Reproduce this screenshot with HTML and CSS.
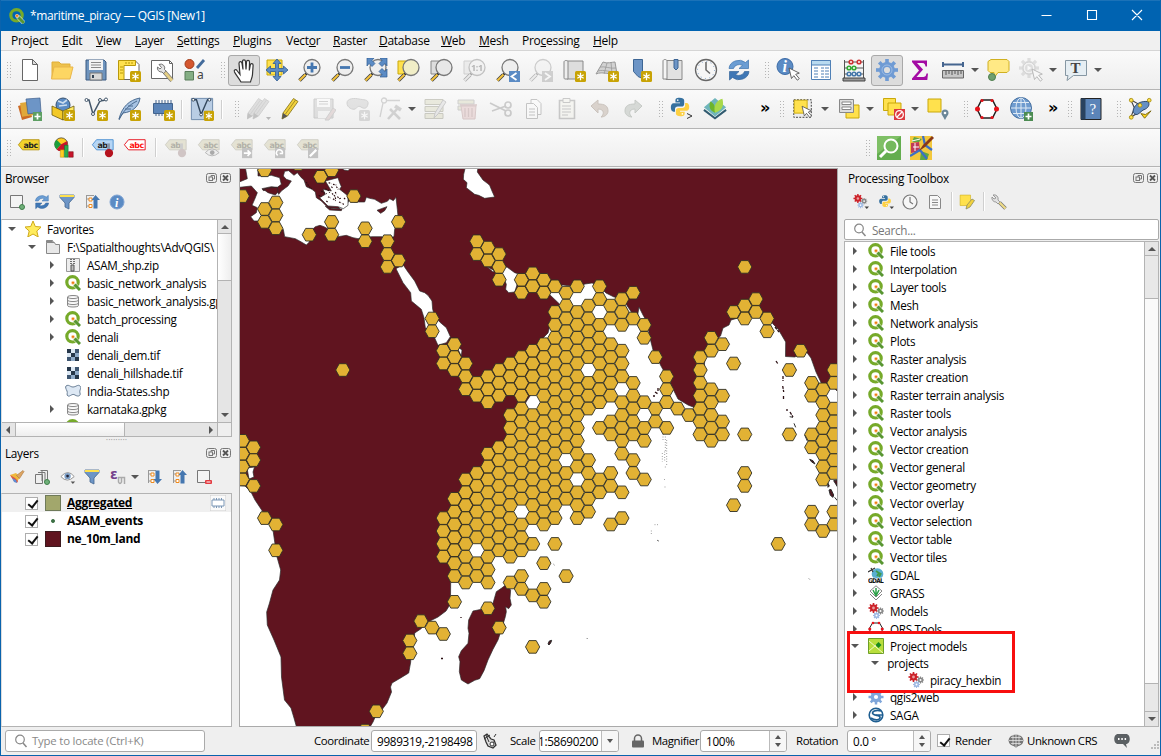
FILE: index.html
```html
<!DOCTYPE html>
<html lang="en">
<head>
<meta charset="utf-8">
<title>*maritime_piracy — QGIS [New1]</title>
<link rel="stylesheet" href="styles.css">
</head>
<body>
<div class="window">
  <header class="titlebar">
    <span class="app-icon" data-icon="q"></span>
    <span class="title">*maritime_piracy — QGIS [New1]</span>
    <svg class="winbtns" viewBox="0 0 120 30" width="120" height="30"><path d="M10.500 15.500h10M56.500 10.500h9v9h-9zM101 10l10 10M111 10l-10 10" fill="none" stroke="#fff" stroke-width="1.1"/></svg>
  </header>
  <nav class="menubar" id="menu"></nav>
  <div class="toolbar" id="tb1"></div>
  <div class="toolbar" id="tb2"></div>
  <div class="toolbar last" id="tb3"></div>
  <main class="work">
    <aside class="left">
      <div class="dock-title"><span>Browser</span><span class="dock-btns" data-icon="dock"></span></div>
      <div class="mini" id="browser-tools"></div>
      <div class="tree-box browser">
        <div class="tree-view">
          <div class="tree" id="browser-tree"></div>
          <div class="vscroll"><i class="arrow up"></i><b class="thumb-a"></b><i class="arrow down"></i></div>
        </div>
        <div class="hscroll"><i class="arrow lf"></i><b></b><em></em><i class="arrow rt"></i><s></s></div>
      </div>
      <div class="splitter">·········</div>
      <div class="dock-title layers-title"><span>Layers</span><span class="dock-btns" data-icon="dock"></span></div>
      <div class="mini layers-mini" id="layer-tools"></div>
      <div class="tree-box layers">
        <div class="layer current"><i class="check"></i><i class="swatch olive"></i><u>Aggregated</u><span class="mem" data-icon="mem"></span></div>
        <div class="layer"><i class="check"></i><i class="swatch point"></i><span>ASAM_events</span></div>
        <div class="layer"><i class="check"></i><i class="swatch land"></i><span>ne_10m_land</span></div>
      </div>
    </aside>
    <section class="map">
      <svg id="map" viewBox="240 169 597 557" width="597" height="557">
        <rect x="240" y="169" width="597" height="557" fill="#60141f"/>
        <g fill="#fff" stroke="#2b2b2b" stroke-width="2" transform="translate(238 166) scale(.33333)">
          <path d="M22 4L28 38 4 48V64L40 60 58 80 50 100 42 118 58 125 55 140 38 152 48 165 90 165 115 200 136 190 140 212 172 218 190 228 205 237 214 228 218 195 232 182 246 178 258 182 272 190 300 212 325 208 345 215 360 218 375 215 400 212 432 212 440 218 468 212 470 190 478 165 480 150 478 130 474 94 466 104 455 98 448 106 430 112 410 100 395 97 385 94 380 108 350 108 335 100 325 118 300 118 305 128 270 125 250 105 235 95 232 78 222 70 205 62 198 42 190 35 178 20 168 28 152 14 140 16 136 30 145 40 160 45 150 60 130 75 122 85 118 75 105 66 76 74 72 68 100 62 118 64 130 55 125 35 100 28 60 30 60 4z"/>
          <path d="M262 45L300 35 305 50 310 62 305 70 318 80 330 90 330 118 316 128 300 122 270 120 255 105 245 95 262 85 255 70 280 75z"/>
          <path d="M308 4H340L330 14 318 12z"/>
          <path d="M76 70L95 66 118 64 120 78 112 87 90 80zM262 121L285 128 312 129 310 134 275 132zM417 133L430 128 447 122 440 134 428 142z" fill="#60141f"/>
          <path d="M250 75l6 5 10 3M262 68l10 6 3 6M270 92l8 4M282 82l9 9 2 8M295 62l6 8M285 98l8 6M298 92l7 6 5-2M265 105l6 5M303 108l8 3M280 62l5 5M318 96l5 5M242 88l8 4M272 50l8 3M314 112l3 4M205 48l8 14 8 6M285 55l10 2M292 78l3 8" fill="none" stroke="#2b1014" stroke-width="3.500" stroke-dasharray="5 3"/>
          <path d="M682 4L677 25 676 40 687 50 685 65 710 85 722 88 740 97 770 93 762 75 755 58 748 52 735 42 718 18 720 4z"/>
          <path d="M745 300L765 318 790 300 808 304 830 320 845 325 836 360 830 378 812 380 803 370 805 355 795 330z"/>
          <path d="M474 308L495 296 510 318 530 345 545 375 560 380 570 388 582 405 584 430 590 450 605 468 625 485 637 512 625 530 600 538 585 505 562 485 558 455 550 430 520 405 518 380 495 350zM655 540L672 552 670 570z"/>
        </g>
        <g fill="#fff" stroke="#2b2b2b" stroke-width=".7">
          <path d="M532 393L526 402 520 420 500 460 480 490 463 540 455 570 450.700 582 450.500 596 449.700 605 446 611 438 617 428 622 420.700 629 414.700 633 414 642 411 652 410.700 662 408.700 673 401 677.700 392 683 390.500 687 391.500 692 387 703 381 711 376 715 373 722 370 727H838V392L831 385 821.300 383 816 372 811 358 806.500 352 794.700 357 785.500 356.500 785.700 342 781 334 778 329 773 324 768 317 755 313 738 318 731 320 729 325 723 328 720.500 336 712 344 705 355 704 373 703 405 694.500 407.500 688 405 678 399 673 389 670 382 661 366 653 350 650 338 647 322 643 315 639 307 637.500 316 632 313 622 298 614 297 606 293 598 285 592 283 585 284 578 287 563 285 555 287 549 294 559.500 304 552 317 548 333 543 338 540 370z"/>
          <path d="M239 485.500L245 486 251 492 255 500 261 509 268 520 273 530 275 544 277 557 280.700 570 279.500 580 273 590 269.500 603 266.700 612 267.300 625 274 640 281 657 281.500 677 284.500 700 291 708 294 718 296.500 727H239z"/>
          <path d="M247 468L254.500 467 253 472 254 477 249 479z"/>
        </g>
        <path transform="translate(238 410) scale(.33333)" fill="#60141f" stroke="#2b2b2b" stroke-width="2" d="M803 525L818 540 816 565 820 585 812 596 803 590 805 605 802 620 790 660 780 690 765 718 750 750 738 782 725 806 710 811 690 822 670 810 664 785 666 755 662 740 670 722 690 700 693 670 690 655 692 630 705 603 730 598 745 592 765 580 775 545 790 535z"/>
        <g transform="translate(538 410) scale(.33333)" fill="#4f1620" stroke="#2b2b2b">
          <path d="M30 702l4-9 7-2-3 8-5 6zM873 240l6-2 8 17-2 7-8-6zM887 212l11-2v20zM815 148l10 4 6 10-10-6zM869 218l5 10-4 4zM890 262l8 10M800 75l8 18M768 40l5 12M755 20l10 2M358 391l4 2M146 684l2 2M813 506l2 2M47 463l2 2" stroke-width="3"/>
          <path d="M375 72v22M382 80v45M386 90v80M373 130v25M380 125v30M382 170v5M378 208l6 2M381 230v4M350 344h10M340 362v15" fill="none" stroke-width="2" stroke-dasharray="2 6"/>
        </g>
        <path d="M783 376v5M782.700 386l1 6M783.500 396v4M787 409v2M790 412l3 5M776 361l2 3M775 327l4 5M655 392l3 2M653 396h2M658 388v3M441 658.500h2M461 617v1" stroke="#2b1014" stroke-width="1.300" stroke-dasharray="3 1"/>
        <g id="hexes" fill="#e2b234" stroke="#2f2f24" stroke-width=".9"></g>
      </svg>
    </section>
    <aside class="right">
      <div class="dock-title"><span>Processing Toolbox</span><span class="dock-btns" data-icon="dock"></span></div>
      <div class="mini" id="proc-tools"></div>
      <div class="search"><span data-icon="find"></span>Search...</div>
      <div class="tree-box toolbox">
        <div class="tree" id="proc-tree"></div>
        <div class="vscroll"><i class="arrow up"></i><b class="thumb-b"></b><em></em><b class="thumb-c"></b><i class="arrow down"></i></div>
      </div>
    </aside>
  </main>
  <footer class="status">
    <div class="locate"><span data-icon="find"></span>Type to locate (Ctrl+K)</div>
    <span class="lab coord-lab">Coordinate</span><div class="field coord">9989319,-2198498</div>
    <span class="mouse" data-icon="mouse"></span>
    <span class="lab scale-lab">Scale</span><div class="field scale"><span>1:58690200</span><i><b class="arrow down"></b></i></div>
    <span class="lock" data-icon="lock"></span>
    <span class="lab magn-lab">Magnifier</span><div class="field magn"><span>100%</span><i><b class="arrow up"></b><b class="arrow down"></b></i></div>
    <span class="lab rot-lab">Rotation</span><div class="field rot"><span>0.0 °</span><i><b class="arrow up"></b><b class="arrow down"></b></i></div>
    <i class="check rcheck"></i><span class="lab render-lab">Render</span>
    <span class="globe" data-icon="crs"></span><span class="lab crs-lab">Unknown CRS</span>
    <span class="bubble" data-icon="bubble"></span>
    <span class="sizegrip" data-icon="sgrip"></span>
  </footer>
</div>
<script src="app.js"></script>
</body>
</html>
```
FILE: styles.css
```css
* { box-sizing: border-box; }
body { margin: 0; font: 11.700px/18px "Open Sans", "Noto Sans", sans-serif; letter-spacing: -.3px; color: #000; overflow: hidden; }
svg { display: block; }
i, em { font-style: normal; }
s { text-decoration: none; }
.window { width: 1161px; height: 756px; display: flex; flex-direction: column; background: #efefef; border: 1px solid #0a63ad; border-top: 0; }
.titlebar { height: 31px; flex: none; background: #0063b1; border-top: 1px solid #1b72b8; color: #fff; display: flex; align-items: center; padding-left: 8px; }
.title { margin-left: 5px; font-size: 12px; letter-spacing: -.36px; flex: 1; }
.winbtns { margin-right: 9px; margin-top: -2px; }
.menubar { height: 20px; flex: none; display: flex; padding-left: 10px; font-size: 12px; letter-spacing: -.27px; line-height: 20px; background: #f0f0f0; border-bottom: 1px solid #d5d5d5; }
.menubar span { flex: none; white-space: nowrap; }
.toolbar { height: 39px; flex: none; display: flex; align-items: center; background: linear-gradient(#fafafa, #eeeeee); border-bottom: 1px solid #b4b4b4; padding-left: 1px; }
.toolbar.last { height: 38px; }
.cell { flex: none; height: 32px; display: flex; align-items: center; justify-content: center; }
.cell.on { background: #dcdcdc; border: 1px solid #a9a9a9; border-radius: 3px; height: 31px; }
.grip { flex: none; height: 18px; width: 5px; background: radial-gradient(circle, #b5b5b5 .8px, transparent 1px) 0 0 / 3px 3px; }
.sep { width: 1px; height: 19px; background: #cfcfcf; border-right: 1px solid #fff; box-sizing: content-box; }
.arrow { display: block; width: 0; height: 0; border: 4px solid transparent; border-top-color: #555; border-bottom: 0; }
.arrow.up { border: 4px solid transparent; border-bottom-color: #555; border-top: 0; }
.arrow.lf { border: 4px solid transparent; border-right-color: #555; border-left: 0; }
.arrow.rt { border: 4px solid transparent; border-left-color: #555; border-right: 0; }
.more { font: bold 16px/16px "DejaVu Sans", sans-serif; padding-bottom: 3px; }
.work { flex: 1; min-height: 0; display: flex; border-top: 1px solid #f5f5f5; }
.left { width: 231px; flex: none; display: flex; flex-direction: column; }
.map { flex: none; margin-left: 7px; width: 599px; height: 559px; border: 1px solid #aaa; }
.right { margin-left: 6px; width: 315px; flex: none; display: flex; flex-direction: column; }
.dock-title { height: 20px; flex: none; display: flex; justify-content: space-between; align-items: center; padding: 0 1px 0 4px; font-size: 11.800px; }
.mini { height: 27px; margin-bottom: 4px; flex: none; display: flex; align-items: center; }
.tree-box { background: #fff; border: 1px solid #b3b3b3; overflow: hidden; }
.browser { height: 218px; flex: none; display: flex; flex-direction: column; border-left-color: #ddd; }
.tree-view { display: flex; flex: 1; min-height: 0; }
.tree { flex: 1; min-width: 0; overflow: hidden; }
.row { height: 18px; display: flex; align-items: center; white-space: nowrap; }
.row .tw { width: 9px; flex: none; display: flex; justify-content: center; }
.row .ic { width: 16px; flex: none; margin: 0 6px 0 9px; }
.vscroll { width: 14px; flex: none; border-left: 1px solid #b3b3b3; background: #e5e5e5; display: flex; flex-direction: column; align-items: center; }
.vscroll .arrow { margin: 5px 0 4px; flex: none; }
.vscroll .arrow.down { margin-top: auto; margin-bottom: 5px; }
.vscroll b { width: 100%; background: linear-gradient(90deg, #fff, #eee); border: solid #b3b3b3; border-width: 1px 0; flex: none; }
.thumb-a { height: 48px; }
.hscroll { height: 14px; flex: none; display: flex; align-items: center; border-top: 1px solid #b3b3b3; background: #e5e5e5; }
.hscroll .lf { margin: 0 5px 0 4px; }
.hscroll b { width: 110px; height: 100%; background: linear-gradient(#fff, #eee); border: solid #b3b3b3; border-width: 0 1px; }
.hscroll em { flex: 1; }
.hscroll .rt { margin: 0 4px 0 5px; }
.hscroll s { width: 14px; height: 100%; border-left: 1px solid #b3b3b3; background: #efefef; }
.splitter { height: 6px; flex: none; line-height: 5px; text-align: center; color: #999; font-size: 9px; letter-spacing: 0; }
.layers-title { height: 19px; }
.layers-mini { height: 29px; margin-bottom: 2px; }
.layers { flex: none; height: 234px; border-left-color: #ddd; }
.layer { height: 18px; display: flex; align-items: center; padding-left: 23px; font-size: 12px; font-weight: bold; letter-spacing: -.32px; }
.layer.current { background: #f0f0f0; }
.layer u { flex: 1; }
.mem { margin-right: 5px; }
.check { width: 13px; height: 13px; border: 1px solid #adadad; background: #fff; flex: none; position: relative; }
.check::after { content: ""; position: absolute; left: 3.500px; top: .5px; width: 4px; height: 8px; border: solid #111; border-width: 0 2px 2px 0; transform: rotate(38deg); }
.swatch { width: 16px; height: 16px; margin: 0 6px 0 7px; flex: none; }
.olive { background: #a2a76c; border: 1px solid #6f7a5a; }
.land { background: #60141f; border: 1px solid #3c1b1f; }
.point { background: radial-gradient(circle, #3d7045 1.500px, transparent 2.300px); }
.search { height: 21px; flex: none; background: #fff; border: 1px solid #aaa; border-radius: 2px; display: flex; align-items: center; color: #777; padding-left: 6px; }
.search span { margin-right: 5px; }
.toolbox { height: 486px; flex: none; margin-top: 1px; display: flex; }
.thumb-b { height: 44px; background: #e8e8e8 !important; }
.vscroll em { flex: 1; width: 100%; background: #fafafa; }
.thumb-c { height: 29px; background: #e8e8e8 !important; }
.toolbox .vscroll .arrow.down { margin-top: 5px; }
.group { height: 50px; position: relative; z-index: 2; }
.group-box { position: absolute; left: 2px; top: -7px; width: 168px; height: 62px; border: 3px solid #f80f0f; background: #fff; padding-top: 3px; }
.group-box .row { height: 16.500px; }
.group-box .row:nth-child(1) { height: 18px; }
.status { height: 29px; flex: none; display: flex; align-items: center; padding-left: 4px; white-space: nowrap; }
.status > * { flex: none; }
.lab { font-size: 11.400px; letter-spacing: -.38px; }
.locate { width: 200px; height: 22px; background: #fff; border: 1px solid #aaa; border-radius: 3px; display: flex; align-items: center; color: #888; padding-left: 6px; font-size: 11.400px; letter-spacing: -.2px; }
.locate span { margin-right: 4px; }
.coord-lab { margin-left: 109px; width: 54px; }
.scale-lab { width: 26px; }
.magn-lab { width: 45px; }
.render-lab { width: 36px; }
.crs-lab { width: 68px; }
.field { height: 22px; background: #fff; border: 1px solid #aaa; border-radius: 3px; display: flex; align-items: center; margin-left: 3px; overflow: hidden; padding-left: 5px; }
.field > i { margin-left: auto; width: 17px; flex: none; height: 100%; border-left: 1px solid #bbb; background: #f6f6f6; display: flex; flex-direction: column; align-items: center; justify-content: center; gap: 4px; }
.coord { width: 106px; }
.mouse { margin: 0 12px 0 5px; }
.scale { width: 80px; padding-left: 0; }
.scale span { margin-left: -2px; }
.lock { margin: 0 7px 0 12px; }
.magn { width: 87px; }
.rot-lab { margin-left: 9px; width: 42px; }
.rot { width: 84px; margin-left: 9px; }
.field > i .arrow { border-left-width: 3px; border-right-width: 3px; }
.rcheck { margin: 0 5px 0 6px; }
.globe { margin: 0 3px 0 17px; }
.bubble { margin-left: 19px; }
.sizegrip { margin: 10px 0 0 auto; }
```
FILE: app.js
```js
const star = '<rect x="13" y="13" width="11" height="11" rx="1.500" fill="#c8a305"/><path d="M18.500 14.800v7.400M15.300 16.700l6.400 3.600M21.700 16.700l-6.400 3.600" stroke="#fff" stroke-width="1.300"/>';
const mag = (h, f, s = '#777') => `<path d="M9 15l-3 3" stroke="#333" stroke-width="2.500"/><path d="M7 17l-5.500 5.500" stroke="#444" stroke-width="3.600"/><path d="M7.500 16.500l-6 6" stroke="${h}" stroke-width="2"/><circle cx="14" cy="9.500" r="8" fill="${f}" stroke="${s}" stroke-width="1.300"/>`;
const cursor = (x, y, f = '#fff') => `<path transform="translate(${x} ${y})" d="M0 0l2.500 10.500 2.300-2.800 3.500 4.500 2-1.600-3.600-4.300 3.600-1.200z" fill="${f}" stroke="#555" stroke-width=".9"/>`;
const tag = (t, f, s, c) => `<path d="M6 4h18v11H6L1.500 9.500z" fill="${f}" stroke="${s}"/><text x="7" y="13" font-family="DejaVu Sans" font-weight="bold" font-size="8.500" letter-spacing="-.4" fill="${c}">${t}</text>`;
const gray = tag('abc', '#e4e2d3', '#cecdc4', '#b2b1a8');
const gear = (cx, cy, r, c, hole) => { let s = ''; for (let a = 0; a < 8; a++) s += `<path d="M${cx} ${cy}v-${r}" stroke="${c}" stroke-width="${r * .33}" transform="rotate(${a * 45} ${cx} ${cy})"/>`; return s + `<circle cx="${cx}" cy="${cy}" r="${r * .72}" fill="${c}"/><circle cx="${cx}" cy="${cy}" r="${r * .28}" fill="${hole}"/>`; };
const gears = gear(5.500, 5, 5, '#cc2229', '#e9a0a0') + gear(12.500, 8, 3.500, '#888', '#fff') + gear(8.500, 12.500, 3.500, '#9db9e3', '#fff');
const sync = '<path d="M2 10.500A10 9 0 0 1 18.500 4.500L21.500 2v8.500H12l3.500-3.200A6 5 0 0 0 6.500 10.500z" fill="#6b9dd3" stroke="#3c72ae" stroke-width=".7"/><path d="M22 13.500A10 9 0 0 1 5.500 19.500L2.500 22v-8.500H12l-3.500 3.200a6 5 0 0 0 9-3.200z" fill="#3f77b5" stroke="#35659b" stroke-width=".7"/>';
const py = '<path d="M11.500 2c-4 0-4.500 1.500-4.500 3v2h5v1H5c-2 0-3 2-3 4.500S3 17 5 17h1.500v-2.500c0-2 1.200-3 3-3h4c1.800 0 3-1 3-2.800V5c0-2-2-3-5-3z" fill="#36719f"/><path d="M12.500 22c4 0 4.500-1.500 4.500-3v-2h-5v-1h7c2 0 3-1.500 3-4s-1-4.500-3-4.500h-1.500V10c0 2-1.200 3-3 3h-4c-1.800 0-3 1-3 2.800V19c0 2 2 3 5 3z" fill="#fdd043"/><circle cx="9.500" cy="4.500" r=".9" fill="#fff"/><circle cx="14.500" cy="19.500" r=".9" fill="#fff"/>';
const db = '<path d="M2.500 4c0-2 11-2 11 0v8.500c0 2-11 2-11 0zM2.500 4c0 2 11 2 11 0M2.500 7c0 2 11 2 11 0M2.500 10c0 2 11 2 11 0" fill="#f3f3f3" stroke="#888"/>';
const pencil = (f, e) => `<path d="M4 22l1-6L15.500 1.500l4.500 3L9.500 19z" fill="${f}" stroke="${e}" stroke-width=".9"/><path d="M4 22l1-6 4.500 3z" fill="#555"/><path d="M7.500 17L17.500 3" stroke="${e}" stroke-width=".8"/>`;
const note = '<path d="M2 2h19v19H2z" fill="#ffe14d" stroke="#c9a80b"/>';

// name: [view size, markup]
const ICONS = {
  q: [16, '<circle cx="7.500" cy="7.300" r="5.700" fill="none" stroke="#76aa2a" stroke-width="3.200"/><path d="M8.500 8.300l6.500 7" stroke="#fff" stroke-width="4.500" opacity=".55"/><path d="M9.500 9.500l5.500 5.500" stroke="#589632" stroke-width="3"/><circle cx="8" cy="7.800" r="1.900" fill="#f9c98a"/><circle cx="8" cy="7.800" r="1.100" fill="#ee7913"/>'],
  new: [24, '<path d="M4.500 1.500h10l5 5v16h-15z" fill="#fff" stroke="#666"/><path d="M14.500 1.500v5h5z" fill="#ddd" stroke="#666"/>'],
  open: [24, '<path d="M2 20V4h7l2 2h9v3" fill="#eec24c" stroke="#e0ae38"/><path d="M1.500 21L4 9h19l-3 12z" fill="#fdd663" stroke="#eab64a"/>'],
  save: [24, '<path d="M2 2h18l2 2v18H2z" fill="#6f94bd" stroke="#3b5a82"/><path d="M5 2h14v10H5z" fill="#f3f3f3"/><path d="M7 4.500h10M7 7h10M7 9.500h10" stroke="#888"/><path d="M6 15h12v7H6z" fill="#d8d8d8" stroke="#777"/><path d="M9 17v3" stroke="#345" stroke-width="2"/>'],
  layout: [24, '<path d="M4 2.500h14l4 4v15H4z" fill="#fff" stroke="#666"/><path d="M1.500 2.500h17v5H7v14H1.500z" fill="#ffe14d" stroke="#b8980b"/><path d="M3 9h3M3 12h3M3 15h3M9 4v2M12 4v2M15 4v2" stroke="#b8980b"/>' + star],
  manager: [24, '<path d="M1.500 2.500h18l3 3v15h-21z" fill="#fff" stroke="#666"/><path d="M19.500 2.500v3h3" fill="none" stroke="#666"/><path d="M9 6.500a4 4 0 0 1 5.500 5l2 2-2.500 2.500-2-2a4 4 0 0 1-4.500-5l2.500 2 1.500-1.500z" fill="#e5e5e5" stroke="#777"/><path d="M14.500 14l7.500 8.500" stroke="#777" stroke-width="4.200"/><path d="M15 14.500l7 8" stroke="#e5cf85" stroke-width="2.800"/>'],
  style: [24, '<circle cx="6.500" cy="6" r="4.500" fill="#d4572f" stroke="#a23c1a"/><path d="M14 10l7-8" stroke="#446c9c" stroke-width="2.800"/><path d="M2 13.500h8.500V22H2z" fill="#84ae84" stroke="#597d5a"/><text x="14" y="21" font-family="Noto Sans" font-size="12" fill="#444">a</text>'],
  hand: [28, '<path d="M11 26c-3-5-5-7-6.500-10-1-2.500 1.500-3 2.500-1.500l3 4-1-11c0-2.300 2.500-2.500 3 0l1 6-.5-8c0-2.300 2.800-2.300 3 0l.5 8 .5-7.500c.2-2.300 3-2 3 0l-.2 8.500 1-5.500c.4-2 3-1.600 2.800.5l-.6 9c-.2 3-1.500 5-2 7.500z" fill="#fff" stroke="#333" stroke-width="1.200"/>'],
  pan: [24, '<path d="M2 2h15v15H2z" fill="#ffe14d" stroke="#c9a80b"/><path d="M12 1l4 4.500h-2.500v5h5V8L23 12l-4.500 4v-2.500h-5v5H16L12 23l-4-4.500h2.500v-5h-5V16L1 12l4.500-4v2.500h5v-5H8z" fill="#5b8bc4" stroke="#2f5c92" stroke-width=".8"/>'],
  zin: [24, mag('#f5c33c', '#eee') + '<path d="M14 4.500v10M9 9.500h10" stroke="#4577b0" stroke-width="2.800"/>'],
  zout: [24, mag('#f5c33c', '#eee') + '<path d="M9 9.500h10" stroke="#4577b0" stroke-width="2.800"/>'],
  zfull: [24, mag('#f5c33c', '#eee') + '<path d="M3 0h7L8 2.500l3 3-3 3-3-3L3 8zM23 0h-7l2 2.500-3 3 3 3 3-3L23 8zM23 19h-7l2-2.500-3-3 3-3 3 3 2-2.500z" fill="#5b8bc4" stroke="#2f5c92" stroke-width=".7"/>'],
  zsel: [24, '<path d="M1 3h11v13H1z" fill="#ffe14d" stroke="#c9a80b"/>' + mag('#f5c33c', '#f1eec7')],
  zlay: [24, '<path d="M1 3h11v13H1z" fill="#ddd" stroke="#888"/>' + mag('#f5c33c', '#e8e8e8')],
  znat: [24, '<g opacity=".4"><path d="M1 3h11v13H1z" fill="#ddd" stroke="#999"/>' + mag('#ddd', '#eee') + '<text x="8" y="13" font-family="Noto Sans" font-weight="bold" font-size="9" fill="#555">1:1</text></g>'],
  zlast: [24, mag('#f5c33c', '#eee') + '<path d="M13 13h11v11H13z" fill="#5b8bc4"/><path d="M20.500 15l-5 3.500 5 3.500" fill="none" stroke="#fff" stroke-width="1.800"/>'],
  znext: [24, '<g opacity=".33">' + mag('#ddd', '#eee') + '<path d="M13 13h11v11H13z" fill="#888"/><path d="M16 15l5 3.500-5 3.500" fill="none" stroke="#fff" stroke-width="1.800"/></g>'],
  map: [24, '<path d="M5 3h16v18H5z" fill="#ddd" stroke="#888"/><path d="M2 4c0-2 4-2 4 0v17H3c-1 0-1-1-1-2z" fill="#eee" stroke="#888"/>' + star],
  map3d: [24, '<path d="M8 4c4 2 9 0 12 0l2 12c-8 1-14-3-21 0z" fill="#d2d2d2" stroke="#999"/><path d="M5 9c5-1 10 2 16 1M3 13c6-2 12 2 19 0M12 5l-3 11M16 4l1 12" fill="none" stroke="#999" stroke-width=".8"/>' + star],
  bm: [24, '<path d="M5.500 1.500h9v19l-4.500-2-4.500-5z" fill="#6d95c6" stroke="#3c6594"/>' + star],
  book: [24, '<path d="M5 2.500h16v19H5z" fill="#e2e2e2" stroke="#888"/><path d="M2 3c0-2 4-2 4 0v18H2z" fill="#f5f5f5" stroke="#888"/><path d="M13 1.500h4V10l-2 2-2-2z" fill="#6d95c6" stroke="#3c6594"/>'],
  clock: [24, '<circle cx="12" cy="12" r="10.500" fill="#f6f6f6" stroke="#666" stroke-width="1.300"/><path d="M12 4v8l4 3.500" fill="none" stroke="#666" stroke-width="1.500"/><circle cx="12" cy="12" r="8.500" fill="none" stroke="#7b9cc5" stroke-dasharray="1 3.450"/>'],
  sync: [24, sync],
  ident: [24, '<circle cx="9" cy="8.500" r="8" fill="#5b8bc4" stroke="#3b6ba6"/><text x="6.500" y="14" font-family="Liberation Serif" font-style="italic" font-weight="bold" font-size="16" fill="#fff">i</text>' + cursor(13, 10)],
  table: [24, '<path d="M2.500 2.500h19v19h-19z" fill="#fff" stroke="#4f80b6"/><path d="M2.500 2.500h19V7h-19z" fill="#b8daf0" stroke="#4f80b6"/><path d="M5 10h4M12 10h3M16 10h4M5 13h4M12 13h3M16 13h4M5 16h4M12 16h3M16 16h4M5 19h4M12 19h3M16 19h4" stroke="#4f80b6"/>'],
  abacus: [24, '<path d="M2.500 2v18M21.500 2v18M3 4h18M3 10h18M3 16h18" stroke="#555"/><path d="M1 20h22v3H1z" fill="#999" stroke="#444"/><g fill="#fff" stroke-width="1.600"><g stroke="#c33"><circle cx="9" cy="4" r="1.800"/><circle cx="17" cy="4" r="1.800"/></g><g stroke="#3a3"><circle cx="7" cy="10" r="1.800"/><circle cx="12" cy="10" r="1.800"/></g><g stroke="#47a"><circle cx="7" cy="16" r="1.800"/><circle cx="12" cy="16" r="1.800"/><circle cx="17" cy="16" r="1.800"/></g></g>'],
  gear: [24, gear(12, 12, 11, '#6f9bd4', '#ddd') + '<circle cx="12" cy="12" r="5" fill="none" stroke="#9cbbe4"/>'],
  sigma: [24, '<path d="M4 2.500h15v6h-1.500c-.5-3-1.500-3.500-4-3.500H9l6 6.500L8.500 19h6c3 0 3.500-1 4-3.500H20l-.7 6.500H4v-1.500l7-8L4 4z" fill="#a30ba3"/>'],
  measure: [24, '<path d="M2 6.500h20M2 4v5M22 4v5" stroke="#45658f" stroke-width="2"/><path d="M1.500 12.500h21v7.500h-21z" fill="#c6c6c6" stroke="#666"/><path d="M5 13v4M8 13v3M11 13v4M14 13v3M17 13v4M20 13v3" stroke="#555"/>'],
  tip: [24, '<path d="M5 1.500h16l2 2v9l-2 2h-9L8 20v-5.500H4l-2-2v-9z" fill="#ffe985" stroke="#d0b021"/><circle cx="6" cy="19" r="3.500" fill="#6f9f6f" stroke="#4f7f4f"/>'],
  action: [24, '<g opacity=".4">' + gear(10, 10, 10, '#bbb', '#eee') + '<circle cx="10" cy="10" r="6" fill="#eee" stroke="#999"/><circle cx="10" cy="10" r="4" fill="#bbb"/><path d="M8.500 7.500l4 2.500-4 2.500z" fill="#fff"/>' + cursor(13, 11) + '</g>'],
  text: [24, '<path d="M1.500 2.500h21v15h-13L3 22.500l1-5H1.500z" fill="#e6eef3" stroke="#8697a3"/><text x="6.500" y="15" font-family="Liberation Serif" font-weight="bold" font-size="15" fill="#444">T</text>'],
  dsm: [24, '<path d="M0 9l10-3 4 14-10 3z" fill="#cc6a24"/><path d="M3 5h12v14H3z" fill="#e0a83a" transform="rotate(-8 9 12)"/><path d="M8 2l14-1 1 14-13 2z" fill="#6d95c6" stroke="#3f5f8c" stroke-width=".7"/><path d="M15 15h9v9h-9z" fill="#5d9f63"/><path d="M19.500 16.500v6M16.500 19.500h6" stroke="#fff" stroke-width="1.700"/>'],
  gpkg: [24, '<circle cx="12" cy="8" r="7" fill="#5b8bc4" stroke="#35506e"/><path d="M7 4l5 2 4-3M8 9l8-1" stroke="#cde" stroke-width="1.600" fill="none"/><path d="M1 9l11 5v9L1 18z" fill="#f3c927" stroke="#6d5a10" stroke-width=".8"/><path d="M23 9l-11 5v9l11-5z" fill="#ffea63" stroke="#6d5a10" stroke-width=".8"/>' + star],
  shp: [24, '<path d="M2 3l3 0 4 14L16 4l6-1" fill="none" stroke="#44576b" stroke-width="1.500"/><g fill="#fff" stroke="#44576b"><circle cx="2.500" cy="3" r="1.500"/><circle cx="9" cy="17" r="1.500"/><circle cx="16" cy="3" r="1.500"/><circle cx="22" cy="2.500" r="1.500"/></g>' + star],
  feather: [24, '<path d="M2 22C5 10 12 3 23 1c-1 8-7 14-17 15z" fill="#a7c3e3" stroke="#4a6b90"/><path d="M2 23C6 14 12 8 20 4M8 12l6 0M11 9h5" fill="none" stroke="#4a6b90"/>' + star],
  chip: [24, '<path d="M5 3v16M8 3v16M11 3v16M14 3v16M17 3v16M20 3v12" stroke="#42638c"/><path d="M2.500 6.500h19v10h-19z" fill="#5b84b8" stroke="#42638c"/>' + star],
  virt: [26, '<path d="M1.500 1.500h23v23h-23z" fill="#b9cde4" stroke="#6987a9"/><path d="M3 3l4 0 5 16 7-16h4" fill="none" stroke="#33475c" stroke-width="1.500"/><g fill="#fff" stroke="#33475c"><circle cx="3.500" cy="3" r="1.500"/><circle cx="12" cy="19" r="1.500"/><circle cx="21" cy="3" r="1.500"/></g><g transform="translate(2 2)">' + star + '</g>'],
  pens: [24, '<g opacity=".3"><g transform="translate(-4)">' + pencil('#aaa', '#777') + '</g><g transform="translate(2)">' + pencil('#aaa', '#777') + '</g><path d="M19 20h5l-2.500 3z" fill="#333"/></g>'],
  pen: [24, pencil('#f2d13c', '#8d7c20')],
  saveE: [24, '<g opacity=".28"><path d="M2 2h19v19H2z" fill="#aaa" stroke="#666"/><path d="M5 2h13v8H5z" fill="#fff"/><path d="M7 4.500h9M7 7h9" stroke="#777"/><path d="M6 14h12v7H6z" fill="#eee"/><path d="M13 23l8-12 3 2-7 10z" fill="#b99" stroke="#777"/></g>'],
  poly: [24, '<g opacity=".33"><path d="M1 6c0-5 8-5 12-4s10 0 9 5-4 5-7 3-4 1-6 2-8-1-8-6z" fill="#bbb" stroke="#888"/><g style="filter:grayscale(1)">' + star + '</g></g>'],
  vertex: [24, '<g opacity=".27" fill="none" stroke="#777" stroke-width="1.300"><circle cx="5" cy="3.500" r="2.500"/><path d="M8 3.500h13M4 6L1 20"/><path d="M9 22L19 11M11 12l10 10" stroke-width="2.600"/><path d="M16 9l6 4" stroke-width="3.500"/></g>'],
  modify: [24, '<g opacity=".33"><path d="M2 2.500h18v5H2zM2 9.500h18v5H2zM2 16.500h18v5H2z" fill="#d1d0ac" stroke="#77775e"/><path d="M11 21l1-5L20 3l3 2-8 12z" fill="#ccc" stroke="#777"/></g>'],
  trash: [24, '<g opacity=".3"><path d="M2 3h16v4H2zM2 9h16v4H2z" fill="#caca9f" stroke="#777"/><path d="M5 9h15l-1 13H7z" fill="#d7a5a5" stroke="#966"/><path d="M9 11v9M12.500 11v9M16 11v9M4 8h17" stroke="#966" stroke-width="1.300"/></g>'],
  cut: [24, '<g opacity=".33" fill="none" stroke="#777" stroke-width="1.700"><path d="M1 6l16 8M3 14L17 9"/><circle cx="19" cy="8" r="3"/><circle cx="19" cy="16" r="3"/></g>'],
  copy: [24, '<g opacity=".38" fill="#fff" stroke="#777"><path d="M9 2.500h6l4 4v11H9z"/><path d="M4.500 6.500h7l4 4v11h-11z"/><path d="M7 12h6M7 15h6M7 18h6"/></g>'],
  paste: [24, '<g opacity=".35" fill="#f4f4ea" stroke="#777"><path d="M4.500 3.500h15v18h-15z" stroke-width="1.600"/><path d="M8 1.500h7v4H8z"/><path d="M7 9h9M7 12h9M7 15h9M7 18h6"/></g>'],
  undo: [24, '<path d="M3 9l7-6v4c7 0 10 2 10 7 0 4-4 6-7 6 3-2 4-8-3-8v4z" fill="#d9d2cc" stroke="#cac3bd"/>'],
  redo: [24, '<path d="M21 9l-7-6v4c-7 0-10 2-10 7 0 4 4 6 7 6-3-2-4-8 3-8v4z" fill="#d6d9d6" stroke="#c6cac6"/>'],
  python: [24, '<g transform="translate(-1 -1) scale(.92)">' + py + '</g><path d="M17 16.500l5 2.500-5 2.500" fill="none" stroke="#333" stroke-width="1"/>'],
  leaf: [26, '<path d="M1 14l12 9 12-9" fill="none" stroke="#315b70" stroke-width="2.200"/><path d="M1 11L13 1l12 10-12 10z" fill="#6fb5bb"/><path d="M13 17C7 15 6 10 8 5c4 2 6 6 5 12z" fill="#6cb52c"/><path d="M13 17c-2-7 1-13 8-15 2 7 0 13-8 15z" fill="#a9d94a"/>'],
  sel: [26, '<path d="M3 3h19v19H3z" fill="#ececec" stroke="#333" stroke-dasharray="2 1.500"/><path d="M3.500 3.500h14v14h-14z" fill="#ffe14d" stroke="#c9a80b"/>' + cursor(12, 10)],
  selform: [24, '<path d="M9 8h13v13H9z" fill="#ffe14d" stroke="#c9a80b"/><path d="M2.500 2.500h14v13h-14z" fill="#ddd" stroke="#888"/><path d="M5 5h9v2.500H5zM5 10h9v2.500H5z" fill="#fff" stroke="#888"/>'],
  desel: [24, '<path d="M1.500 1.500h12v12h-12z" fill="#ffe14d" stroke="#c9a80b"/><path d="M6 6h13v12H6z" fill="#ffe14d" stroke="#c9a80b"/><path d="M12 12h11v11H12z" fill="#dc3a3f"/><circle cx="17.500" cy="17.500" r="3.800" fill="none" stroke="#fff" stroke-width="1.300"/><path d="M15 20l5-5" stroke="#fff" stroke-width="1.300"/>'],
  selloc: [24, '<path d="M2 2h13v13H2z" fill="#ffe14d" stroke="#c9a80b"/><path d="M19 23c-2-4-3.500-5-3.500-7a3.500 3.500 0 0 1 7 0c0 2-1.500 3-3.500 7z" fill="#6b8798"/><circle cx="19" cy="16" r="1.300" fill="#fff"/>'],
  ors: [24, '<path d="M6.500 3h11L22 12l-4.500 9h-11L2 12z" fill="#fff" stroke="#222" stroke-width="1.500"/><g fill="#e8121a"><circle cx="2.500" cy="12" r="2.500"/><circle cx="21.500" cy="12" r="2.500"/><circle cx="7" cy="3.500" r="1.600"/><circle cx="17" cy="3.500" r="1.600"/><circle cx="7" cy="20.500" r="1.600"/><circle cx="17" cy="20.500" r="1.600"/></g>'],
  osm: [24, '<circle cx="12" cy="11" r="10.500" fill="#6e9bcf" stroke="#456f9f"/><path d="M12 1v20M2 11h20M4 5.500h16M4 16.500h16" stroke="#dfeaf5"/><ellipse cx="12" cy="11" rx="5" ry="10" fill="none" stroke="#dfeaf5"/><path d="M15 15h9v9h-9z" fill="#4c8c52"/><path d="M19.500 16.500v6M16.500 19.500h6" stroke="#fff" stroke-width="1.700"/>'],
  help: [24, '<path d="M2 1.500h20v21H2z" fill="#5b84b8" stroke="#222"/><path d="M2 1.500h4.500v21H2z" fill="#29425f"/><text x="10.500" y="17" font-family="Liberation Serif" font-size="15" fill="#fff">?</text>'],
  topo: [26, '<path d="M3 3l9 5 11-4-4 8-16 10 4-10z" fill="none" stroke="#444" stroke-width="1.200"/><path d="M6 13C8 7 15 4 21 5c3 1 2 6-2 8-4 1-5 4-9 6-4 0-5-3-4-6z" fill="#6590c4" stroke="#2d486a"/><g fill="#ffe14d" stroke="#a88f10"><circle cx="3.500" cy="3.500" r="2"/><circle cx="23" cy="3.500" r="2"/><circle cx="13" cy="9" r="2"/><circle cx="3.500" cy="22" r="2"/></g><path d="M14 18l4 5 7-8-6 4z" fill="#ffd91c" stroke="#776612"/>'],
  abc: [26, tag('abc', '#f3d22b', '#b7981a', '#222')],
  diag: [26, '<circle cx="10" cy="9" r="7" fill="#fc2" stroke="#222" stroke-width=".7"/><path d="M10 9L5 4a7 7 0 0 0 0 10.500z" fill="#1b9e3c"/><path d="M10 9L5 14.500a7 7 0 0 0 11.500-3.500V5.500z" fill="#c7152c"/><path d="M9 15h4v8H9z" fill="#fc2" stroke="#a80" stroke-width=".5"/><path d="M13.500 10h4v13h-4z" fill="#2aae4a" stroke="#063" stroke-width=".5"/><path d="M18 17h5v6h-5z" fill="#c7152c" stroke="#600" stroke-width=".5"/>'],
  abpin: [26, tag('ab', '#b5d5f5', '#4b8fd1', '#222') + '<path d="M19 8v10" stroke="#8796ab" stroke-width="3"/><circle cx="19.500" cy="18.500" r="4.500" fill="#b5121e"/>'],
  abred: [26, tag('abc', '#fff', '#e60f1b', '#f11')],
  g1: [26, tag('ab', '#e4e2d3', '#cecdc4', '#b2b1a8') + '<path d="M19 8v10" stroke="#cdcdcd" stroke-width="3"/><circle cx="19.500" cy="18.500" r="4.500" fill="#d0c5c5"/>'],
  g2: [26, gray + '<path d="M9 18q7-8 15 0q-8 7-15 0z" fill="#eee" stroke="#b5b5b5"/><circle cx="16.500" cy="18" r="2.500" fill="#aaa"/>'],
  g3: [26, gray + '<path d="M13 13h11v11H13z" fill="#c3c3c3"/><path d="M15 18.500h7M19 15.500l3 3-3 3" fill="none" stroke="#fff" stroke-width="1.800"/>'],
  g4: [26, gray + '<path d="M13 13h11v11H13z" fill="#c3c3c3"/><path d="M16 21a3.300 3.300 0 1 1 5-2l-3 0" fill="none" stroke="#fff" stroke-width="1.600"/>'],
  g5: [26, gray + '<path d="M13 13h11v11H13z" fill="#c3c3c3"/><path d="M15 22l7-7" stroke="#fff" stroke-width="2.400"/>'],
  finder: [24, '<path d="M0 0h24v24H0z" fill="#63ad4f"/><path d="M0 0h24L0 18z" fill="#7fc066"/><circle cx="14" cy="10" r="6.500" fill="#74b95d" stroke="#fff" stroke-width="2"/><path d="M9 15l-6 6" stroke="#fff" stroke-width="3"/>'],
  osmap: [24, '<path d="M0 0h22v24H0z" fill="#f3c83d"/><path d="M1 7l8-1 1 9-9 2z" fill="#bf3b59"/><path d="M4 1l8 2-3 3H2zM11 15l8 3-2 6h-7z" fill="#5fa545"/><path d="M13 0l2 9 7 5M0 20l10-6 7 9" fill="none" stroke="#3c6fc6" stroke-width="2.200"/><path d="M2 5l8-2M3 11h6M5 7v8" stroke="#fff"/><path d="M9 15L13 9 22 0l2 2-9 9z" fill="#8a3a16"/>'],
  dock: [26, '<g fill="none" stroke="#777"><rect x="1.500" y="8.500" width="10" height="9" rx="2"/><rect x="4" y="12" width="3.500" height="3.500"/><path d="M6 12v-1.500h3.500V14H8"/><rect x="15.500" y="8.500" width="10" height="9" rx="2"/><path d="M18 10.500l5 5M23 10.500l-5 5" stroke="#555" stroke-width="1.800"/></g>'],
  add: [16, '<path d="M1.500 1.500h12v12h-12z" fill="#f4f4f4" stroke="#777"/><circle cx="13" cy="13" r="2.500" fill="#6faf79" stroke="#3f7f49"/>'],
  sync16: [16, '<g transform="scale(.667)">' + sync + '</g>'],
  funnel: [16, '<path d="M1 1h14v2.500L10 9v6l-4-2V9L1 3.500z" fill="#6d95c6" stroke="#42668f" stroke-width=".8"/><path d="M1 1h14v2H1z" fill="#ffe14d"/>'],
  coll: [16, '<path d="M2 1.500h8M2.500 2v12M2.500 5h4M2.500 12h4" stroke="#999"/><path d="M5 4h3v3H5zM5 10.500h3v3H5z" fill="#fff" stroke="#ef8a1c"/><path d="M11.500 1L16 6h-2.500v8.500h-4V6H7.500z" fill="#4577b0"/>'],
  exp: [16, '<path d="M2 1.500h8M2.500 2v12M2.500 5h4M2.500 12h4" stroke="#999"/><path d="M5 4h3v3H5zM5 10.500h3v3H5z" fill="#fff" stroke="#ef8a1c"/><path d="M11.500 15L16 10h-2.500V1.500h-4V10H7.500z" fill="#4577b0"/>'],
  info: [16, '<circle cx="8" cy="8" r="7" fill="#5b8bc4" stroke="#7ea3d3"/><text x="6" y="12.500" font-family="Liberation Serif" font-style="italic" font-weight="bold" font-size="12" fill="#fff">i</text>'],
  brush: [16, '<path d="M1 6l6-2 4 4-3 5-3-1z" fill="#f0b93c"/><path d="M1 6l4 6 3 2 1-2-3-3z" fill="#d9534a"/><path d="M3 9l2 4 3 1-1-3z" fill="#5d8ed6"/><path d="M7.500 6.500l3 3 4.500-7-1-1z" fill="#dda562" stroke="#a9743a" stroke-width=".6"/>'],
  addgrp: [16, '<path d="M1.500 5.500h7v9h-7zM4 3.500h7v9M6.500 1.500h7v9" fill="none" stroke="#777"/><path d="M8 1v11" stroke="#777"/><circle cx="13" cy="13" r="2.500" fill="#6faf79" stroke="#3f7f49"/>'],
  eye: [18, '<path d="M1 8.500q8-9 15 0q-8 8-15 0z" fill="#fff" stroke="#888"/><circle cx="8.500" cy="8" r="3.600" fill="#7d9fc6"/><circle cx="8.500" cy="8" r="1.500" fill="#223"/><path d="M12 14h5l-2.500 3z" fill="#555"/>'],
  eps: [16, '<text x="0" y="10" font-family="DejaVu Sans" font-weight="bold" font-size="14" fill="#75418c">ε</text><path d="M8 8.500h6.500V15M8.500 8v5q1.500 3 3 0V9" stroke="#aaa" stroke-width="1.500" fill="none"/>'],
  rem: [16, '<path d="M1.500 1.500h12v12h-12z" fill="#f4f4f4" stroke="#777"/><rect x="9" y="11" width="7" height="4" rx="1" fill="#e33b41"/><path d="M10.500 13h4" stroke="#fff"/>'],
  fav: [16, '<path d="M8 0l2.300 5.500 6 .5-4.500 4 1.400 6L8 13l-5.200 3 1.400-6L-.3 6l6-.5z" fill="#ffec5c" stroke="#cfa91b"/>'],
  folder: [16, '<path d="M1.500 3.500v-2h6l1 2M1.500 3.500h8l1 2h4v9h-13z" fill="#e8e8e8" stroke="#888"/><path d="M1.500 1.500h6v2h-6z" fill="#888"/>'],
  zip: [16, '<path d="M1.500 1.500h13v13h-13z" fill="#ededed" stroke="#999"/><path d="M6 2v6M9 2v6" stroke="#444" stroke-width="1.500" stroke-dasharray="1 1"/><path d="M6 8h3v6H6z" fill="#bbb" stroke="#555"/>'],
  db: [16, db],
  tif: [16, '<path d="M2 2h12v12H2z" fill="#8fabc9"/><path d="M2 2h4v4H2zM10 6h-4v4h4zM10 10h4v4h-4z" fill="#26374a"/><path d="M10 2h4v4h-4zM2 10h4v4H2z" fill="#3d5570"/><path d="M6 2h4v4H6zM2 6h4v4H2z" fill="#dce8f4"/>'],
  polyg: [16, '<path d="M1 3c3-2 4 1 7 1s5-3 7-1-1 4 0 7-2 4-5 2-5 2-7 1 0-3-1-5-2-4-1-5z" fill="#dde8f4" stroke="#6a7f96"/>'],
  mem: [16, '<rect x="0" y="0" width="16" height="16" fill="#fafafa" stroke="#ccc"/><path d="M4 3v10M6.500 3v10M9 3v10M11.500 3v10" stroke="#7a96b5"/><path d="M2 5h12v6H2z" fill="#fff" stroke="#7a96b5"/>'],
  gears: [16, gears],
  gearsd: [18, gears + '<path d="M13 14h5l-2.500 3z" fill="#444"/>'],
  pyd: [18, '<g transform="scale(.66)">' + py + '</g><path d="M13 14h5l-2.500 3z" fill="#444"/>'],
  clk: [16, '<circle cx="8" cy="8" r="7" fill="#f6f6f6" stroke="#777" stroke-width="1.200"/><path d="M8 3v5l3 2" fill="none" stroke="#777" stroke-width="1.200"/>'],
  log: [16, '<path d="M2.500 1.500h8l3 3v10h-11z" fill="#f8f8f8" stroke="#888"/><path d="M5 6h6M5 8.500h6M5 11h6" stroke="#888"/>'],
  edit: [16, '<g transform="scale(.55)">' + note + '</g><path d="M7 15l1-4 5-6 2.500 1.500L11 13z" fill="#f2d13c" stroke="#8d8d60" stroke-width=".8"/>'],
  wrench: [16, '<path d="M2 1a4 4 0 0 1 5 5l2 2-2 2-2-2a4 4 0 0 1-4-5l2 2 2-1z" fill="#e2e2e2" stroke="#888" stroke-width=".8"/><path d="M8.500 8.500l6 6" stroke="#777" stroke-width="3.500"/><path d="M8.500 8.500l6 6" stroke="#eedb87" stroke-width="2.200"/>'],
  find: [16, '<circle cx="8" cy="6.500" r="4.300" fill="none" stroke="#888" stroke-width="1.200"/><path d="M11 10l3.500 4" stroke="#888" stroke-width="1.500"/>'],
  gdal: [16, '<circle cx="9.500" cy="7" r="5.800" fill="#58aed0"/><path d="M8 4l3 2-2 3M13 6l-2 4" stroke="#3f9a4b" stroke-width="1.800" fill="none"/><path d="M0 5l7-4M3 1l2 4" stroke="#333" stroke-width="1.200"/><text x="0" y="15.500" font-family="DejaVu Sans Condensed,DejaVu Sans" font-weight="bold" font-size="6.500" letter-spacing="-.7" fill="#111" stroke="#fff" stroke-width="1.200" paint-order="stroke">GDAL</text>'],
  grass: [16, '<path d="M8 .8L14 6 8 12 2 6zM2 9l6 6 6-6" fill="#fff" stroke="#777" stroke-width=".9"/><path d="M8 11L5 5M8 11V3M8 11l3-6" stroke="#2ba048" stroke-width="1.500"/>'],
  ors16: [16, '<path d="M4.500 2h7L15 8l-3.500 6h-7L1 8z" fill="#fff" stroke="#222"/><g fill="#e8121a"><circle cx="1.800" cy="8" r="1.500"/><circle cx="14.200" cy="8" r="1.500"/><circle cx="5" cy="2" r="1.300"/><circle cx="11" cy="2" r="1.300"/></g>'],
  proj: [16, '<path d="M.5.5h15v15H.5z" fill="#b9de3c" stroke="#6e9f28"/><path d="M1 3l14 12M1 13l7-6" stroke="#f2f8c9"/><path d="M10.500 4l3 3-3 3-3-3z" fill="#188a1e"/>'],
  gear16: [16, gear(8, 8, 7.500, '#7fa6da', '#fff')],
  saga: [16, '<circle cx="8" cy="8" r="6.800" fill="#fff" stroke="#1e5e91" stroke-width="1.600"/><path d="M13 4C8 2 3 5 5 7s8 1 7 4-6 2-9 0M8 8h6" fill="none" stroke="#1e5e91" stroke-width="1.700"/>'],
  mouse: [16, '<path d="M2 3l3-2 4 5 3 1 2 5-3 3-5-2-2-4z" fill="#ddd" stroke="#333" stroke-width="1.300"/><path d="M4 2l3 7M2 6l6-4M9 11l4-3M12 4l2-3" fill="none" stroke="#333"/><circle cx="10" cy="11" r="2" fill="#fff" stroke="#333"/>'],
  lock: [14, '<path d="M3.500 7V4.500a3.500 3.500 0 0 1 7 0V7" fill="none" stroke="#666" stroke-width="1.500"/><rect x="1" y="6.500" width="12" height="7" rx="1" fill="#666"/>'],
  crs: [16, '<path d="M1 8l7 7 7-7z" fill="#777"/><ellipse cx="8" cy="7.500" rx="7.500" ry="6" fill="#777"/><path d="M8 1v14M1 7.500h14M3 4.500h10M3 10.500h10M5 2v10M11 2v10" stroke="#eee" stroke-width=".7"/>'],
  bubble: [16, '<path d="M4 1h8c5 0 5 10 0 10l1 4-4-4H4C-1 11-1 1 4 1z" fill="#5b6063"/><path d="M4 6h1.500M7.300 6h1.500M10.600 6h1.500" stroke="#fff" stroke-width="1.800"/>'],
  sgrip: [12, '<path d="M9 2h2M9 5h2M9 8h2M6 5h2M6 8h2M3 8h2" stroke="#aaa" stroke-width="1.500"/>']
};
const svg = n => { const [s, m] = ICONS[n]; return `<svg width="${s}" height="${s}" viewBox="0 0 ${s} ${s}">${m}</svg>`; };
document.querySelectorAll('[data-icon]').forEach(e => { e.innerHTML = svg(e.dataset.icon); });

document.getElementById('menu').innerHTML = [['Pro_ject', 51], ['_Edit', 34], ['_View', 39], ['_Layer', 42], ['_Settings', 56], ['_Plugins', 53], ['Vect_or', 47], ['_Raster', 46], ['_Database', 62], ['_Web', 38], ['_Mesh', 43], ['Pro_cessing', 71], ['_Help', 40]]
  .map(([t, w]) => `<span style="width:${w}px">${t.replace(/_(.)/, '<u>$1</u>')}</span>`).join('');

// Each tool is [kind or icon, horizontal centre]; cells stretch between neighbours.
function bar(id, items, size) {
  let edge = id.startsWith('tb') ? 2 : id === 'proc-tools' ? 844 : 1;
  document.getElementById(id).innerHTML = items.map(([n, c, on]) => {
    const inner = n === '|' ? '<i class="sep"></i>' : n === ':' ? '<i class="grip"></i>' : n === 'v' ? '<i class="arrow"></i>' : n === '>' ? '<span class="more">»</span>' : svg(n);
    const w = n === '|' ? 2 : n === ':' ? 6 : n === 'v' ? 8 : n === '>' ? 12 : on ? 32 : size;
    const gap = c - w / 2 - edge; edge = c + w / 2;
    return `<span class="cell${on ? ' on' : ''}" style="width:${w}px;margin-left:${gap}px">${inner}</span>`;
  }).join('');
}
bar('tb1', [[':', 8], ['new', 30], ['open', 62], ['save', 96], ['layout', 129], ['manager', 162], ['style', 195], [':', 222], ['hand', 244, 1], ['pan', 277], ['zin', 310], ['zout', 343], ['zfull', 376], ['zsel', 409], ['zlay', 442], ['znat', 475], ['zlast', 508], ['znext', 541], ['map', 574], ['map3d', 607], ['bm', 640], ['book', 673], ['clock', 706], ['sync', 739], [':', 766], ['ident', 788], ['table', 821], ['abacus', 854], ['gear', 887, 1], ['sigma', 920], ['measure', 953], ['v', 975], ['tip', 998], ['action', 1031], ['v', 1053], ['text', 1076], ['v', 1098]], 24);
bar('tb2', [[':', 8], ['dsm', 30], ['gpkg', 63], ['shp', 96], ['feather', 129], ['chip', 163], ['|', 182], ['virt', 202], ['|', 222], [':', 236], ['pens', 259], ['pen', 290], ['saveE', 324], ['poly', 358], ['vertex', 391], ['v', 412], ['modify', 435], ['trash', 468], ['cut', 501], ['copy', 534], ['paste', 567], ['undo', 600], ['redo', 633], [':', 660], ['python', 682], ['leaf', 715], ['>', 765], [':', 781], ['sel', 803], ['v', 825], ['selform', 849], ['v', 870], ['desel', 894], ['v', 915], ['selloc', 938], [':', 965], ['ors', 987], ['osm', 1021], ['>', 1053], [':', 1069], ['help', 1091], [':', 1118], ['topo', 1140]], 24);
bar('tb3', [[':', 8], ['abc', 29], ['diag', 64], ['|', 83], ['abpin', 103], ['abred', 135], ['|', 156], ['g1', 176], ['g2', 209], ['g3', 242], ['g4', 275], ['g5', 308], [':', 867], ['finder', 889], ['osmap', 922]], 24);
bar('browser-tools', [['add', 17], ['sync16', 42], ['funnel', 67], ['coll', 92], ['info', 117]], 16);
bar('layer-tools', [['brush', 17], ['addgrp', 42], ['eye', 68], ['funnel', 92], ['eps', 118], ['v', 135], ['exp', 154], ['coll', 179], ['rem', 204]], 16);
bar('proc-tools', [['gearsd', 861], ['pyd', 886], ['clk', 910], ['log', 935], ['|', 952], ['edit', 967], ['|', 984], ['wrench', 999]], 16);

const row = (pad, tw, ic, t) => `<div class="row" style="padding-left:${pad}px"><span class="tw">${tw ? `<i class="arrow ${tw}"></i>` : ''}</span>${ic ? `<span class="ic">${svg(ic)}</span>` : '<span>&nbsp;&nbsp;&nbsp;</span>'}${t}</div>`;
document.getElementById('browser-tree').innerHTML = [[5, 'down', 'fav', 'Favorites'], [25, 'down', 'folder', 'F:\\Spatialthoughts\\AdvQGIS\\'], [45, 'rt', 'zip', 'ASAM_shp.zip'], [45, 'rt', 'q', 'basic_network_analysis'], [45, 'rt', 'db', 'basic_network_analysis.gpkg'], [45, 'rt', 'q', 'batch_processing'], [45, 'rt', 'q', 'denali'], [45, '', 'tif', 'denali_dem.tif'], [45, '', 'tif', 'denali_hillshade.tif'], [45, '', 'polyg', 'India-States.shp'], [45, 'rt', 'db', 'karnataka.gpkg'], [45, '', 'q', '']].map(r => row(...r)).join('');
const P = 5;
document.getElementById('proc-tree').innerHTML = ['File tools', 'Interpolation', 'Layer tools', 'Mesh', 'Network analysis', 'Plots', 'Raster analysis', 'Raster creation', 'Raster terrain analysis', 'Raster tools', 'Vector analysis', 'Vector creation', 'Vector general', 'Vector geometry', 'Vector overlay', 'Vector selection', 'Vector table', 'Vector tiles'].map(t => row(P, 'rt', 'q', t)).join('')
  + row(P, 'rt', 'gdal', 'GDAL') + row(P, 'rt', 'grass', 'GRASS') + row(P, 'rt', 'gears', 'Models') + row(P, 'rt', 'ors16', 'ORS Tools')
  + '<div class="group"><div class="group-box">' + row(0, 'down', 'proj', 'Project models') + row(20, 'down', '', 'projects') + row(40, '', 'gears', 'piracy_hexbin') + '</div></div>'
  + row(P, 'rt', 'gear16', 'qgis2web') + row(P, 'rt', 'saga', 'SAGA');

// Hexagon bins per column: single half-row indices or [from, to, ...holes] ranges with step 2.
const BINS = { 0: [5, 43, 45, 47, 49], 1: [44, 46, 50], 2: [1, 7, 9, 55], 3: [6, 8, 10, 56, 60], 5: [0], 6: [11], 7: [2], 8: [1, 9, 11], 9: [32], 10: [5], 11: [10, 12, 88], 12: [85], 13: [12, 14, 16], 14: [9, 15], 15: [74, 76], 16: [71], 17: [24, 26, 72],
  18: [29, 31, [55, 61], 73], 19: [28, 30, 32, [52, 64], 68], 20: [31, 33, 35, [49, 65]], 21: [12, 14, 34, 36, [48, 64, 60]], 22: [13, 15, 33, 35, 37, [45, 65], 69], 23: [14, 16, 18, 32, 34, 36, [44, 60], 72], 24: [31, 33, 35, [39, 61], 65], 25: [18, 20, 30, 32, 34, 36, [38, 60, 54], 64, 66], 26: [17, 19, 29, 31, 33, 35, [39, 59, 57], 67, 75],
  27: [18, 20, [28, 56], 62, 66, 68], 28: [19, [23, 55], 59], 29: [[20, 52, 46], 64], 30: [19, [23, 55, 49]], 31: [[22, 38, 32], [46, 54]], 32: [19, 21, [25, 37], 41, 49, 51], 33: [22, 24, [28, 36], 40, 42, 48, 50, 56], 34: [21, 23, 25, 29, 31, 33, [37, 45], 51, 55], 35: [20, 24, [34, 42], 46, 48], 36: [25, 27, 37, 41, 43, 49], 37: [30, 38, 40], 38: [33, 35, 37, 41], 39: [38], 40: [39],
  41: [[30, 42]], 42: [27, 29, [35, 43]], 43: [28, 36, 40, 42], 44: [23, 31, 53], 45: [16, 22, 24, 42, 48, 50], 46: [21, 23], 47: [24, 26], 48: [59], 49: [32, 42], 50: [29], 51: [34, 36, 42, 44, 54, 56], 52: [[35, 49], 57], 53: [32, 34, [38, 48], 54, 56] };
let hex = '';
for (const c in BINS) for (const b of BINS[c]) {
  const [from, to, ...holes] = Array.isArray(b) ? b : [b, b];
  for (let h = from; h <= to; h += 2) if (!holes.includes(h)) hex += `<path d="M${(242.300 + 11.165 * c - 7.100).toFixed(1)} ${(163.900 + 6.440 * h).toFixed(1)}l3.500 -6.300h7.200l3.500 6.300l-3.500 6.300h-7.200z"/>`;
}
document.getElementById('hexes').innerHTML = hex;
```
